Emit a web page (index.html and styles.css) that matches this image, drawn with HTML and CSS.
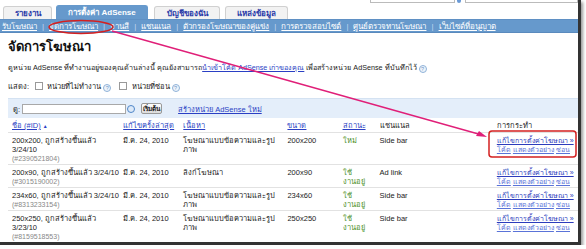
FILE: index.html
```html
<!DOCTYPE HTML>
<html>
    <head>
        <meta charset='utf-8'/>
        <link rel="stylesheet" href="styles.css">
    </head>
    <body>
        <div class="frame">
            <div class="chrome">
                <span class="cbox cbox1"></span>
                <span class="cdot"></span>
                <span class="cbox cbox2"></span>
            </div>
            <div class="tabs">
                <span class="tab t1">รายงาน</span>
                <span class="tab t2 on">การตั้งค่า AdSense</span>
                <span class="tab t3">บัญชีของฉัน</span>
                <span class="tab t4">แหล่งข้อมูล</span>
            </div>
            <div class="subnav">
                <a>รับโฆษณา</a><i>|</i>
                <a>จัดการโฆษณา</a><i>|</i>
                <a>จานสี</a><i>|</i>
                <a>แชนแนล</a><i>|</i>
                <a>ตัวกรองโฆษณาของคู่แข่ง</a><i>|</i>
                <a>การตรวจสอบไซต์</a><i>|</i>
                <a>ศูนย์ตรวจทานโฆษณา</a><i>|</i>
                <a>เว็บไซต์ที่อนุญาต</a>
            </div>
            <div class="main">
                <h1>จัดการโฆษณา</h1>
                <p class="desc">ดูหน่วย AdSense ที่ทำงานอยู่ของคุณด้านล่างนี้ คุณยังสามารถ<a>นำเข้าโค้ด AdSense เก่าของคุณ</a> เพื่อสร้างหน่วย AdSense ที่บันทึกไว้ <span class="help">?</span></p>
                <div class="show">
                    แสดง: <span class="cb"></span> หน่วยที่ไม่ทำงาน <span class="help">?</span>
                    <span class="cb cb2"></span> หน่วยที่ซ่อน <span class="help">?</span>
                </div>
                <div class="filter">
                    <span>ดู:</span>
                    <span class="field"></span>
                    <span class="go"></span>
                    <span class="btn">เริ่มต้น</span>
                    <a class="new">สร้างหน่วย AdSense ใหม่</a>
                </div>
                <table class="units">
                    <colgroup>
                        <col style="width:111px"><col style="width:60px"><col style="width:104px">
                        <col style="width:55px"><col style="width:37px"><col style="width:117px"><col style="width:85px">
                    </colgroup>
                    <tr class="head">
                        <th><a>ชื่อ (#ID)</a> <span class="sort">▲</span></th>
                        <th><a>แก้ไขครั้งล่าสุด</a></th>
                        <th><a>เนื้อหา</a></th>
                        <th><a>ขนาด</a></th>
                        <th><a>สถานะ</a></th>
                        <th>แชนแนล</th>
                        <th>การกระทำ</th>
                    </tr>
                    <tr class="r3">
                        <td>200x200, ถูกสร้างขึ้นแล้ว<br>3/24/10<span class="id">(#2390521804)</span></td>
                        <td>มี.ค. 24, 2010</td>
                        <td>โฆษณาแบบข้อความและรูป<br>ภาพ</td>
                        <td>200x200</td>
                        <td class="st">ใหม่</td>
                        <td>Side bar</td>
                        <td><a class="edit">แก้ไขการตั้งค่าโฆษณา »</a><br><a class="sm">โค้ด</a> <a class="sm">แสดงตัวอย่าง</a> <a class="sm">ซ่อน</a></td>
                    </tr>
                    <tr>
                        <td>200x90, ถูกสร้างขึ้นแล้ว 3/24/10<span class="id">(#3015190002)</span></td>
                        <td>มี.ค. 24, 2010</td>
                        <td>ลิงก์โฆษณา</td>
                        <td>200x90</td>
                        <td class="st">ใช้<br>งานอยู่</td>
                        <td>Ad link</td>
                        <td><a class="edit">แก้ไขการตั้งค่าโฆษณา »</a><br><a class="sm">โค้ด</a> <a class="sm">แสดงตัวอย่าง</a> <a class="sm">ซ่อน</a></td>
                    </tr>
                    <tr>
                        <td>234x60, ถูกสร้างขึ้นแล้ว 3/24/10<span class="id">(#8313233154)</span></td>
                        <td>มี.ค. 24, 2010</td>
                        <td>โฆษณาแบบข้อความและรูป<br>ภาพ</td>
                        <td>234x60</td>
                        <td class="st">ใช้<br>งานอยู่</td>
                        <td>Side bar</td>
                        <td><a class="edit">แก้ไขการตั้งค่าโฆษณา »</a><br><a class="sm">โค้ด</a> <a class="sm">แสดงตัวอย่าง</a> <a class="sm">ซ่อน</a></td>
                    </tr>
                    <tr class="r3">
                        <td>250x250, ถูกสร้างขึ้นแล้ว<br>3/23/10<span class="id">(#8159518553)</span></td>
                        <td>มี.ค. 24, 2010</td>
                        <td>โฆษณาแบบข้อความและรูป<br>ภาพ</td>
                        <td>250x250</td>
                        <td class="st">ใช้<br>งานอยู่</td>
                        <td>Side bar</td>
                        <td><a class="edit">แก้ไขการตั้งค่าโฆษณา »</a><br><a class="sm">โค้ด</a> <a class="sm">แสดงตัวอย่าง</a> <a class="sm">ซ่อน</a></td>
                    </tr>
                </table>
            </div>
            <!-- red marks drawn over the shot -->
            <svg class="marks" width="586" height="249" viewBox="0 0 586 249">
                <ellipse cx="81" cy="27" rx="32" ry="6.5" fill="none" stroke="#d42020" stroke-width="1.5"/>
                <line x1="112" y1="31" x2="482" y2="135" stroke="#e01f78" stroke-width="1.3"/>
                <polygon points="487,137 476,136 479,131" fill="#e01f78"/>
                <rect x="489" y="131" width="87" height="26" rx="3" fill="none" stroke="#d42020" stroke-width="1.5"/>
            </svg>
        </div>
    </body>
</html>
```

FILE: styles.css
```css
body{
    margin: 0;
    background: #fff;
    font-family: "Liberation Sans", "Noto Sans", sans-serif;
    font-size: 8px;
    color: #222;
}
a{
    color: #2a3fc4;
    text-decoration: underline;
}
.frame{
    position: relative;
    width: 578px;
    height: 242px;
    overflow: hidden;
    border-right: 3px solid #333;
    border-bottom: 3px solid #333;
    box-shadow: 2px 2px 3px #999;
}
.chrome{
    display: flex;
    height: 3px;
}
.cbox{
    display: block;
    height: 2px;
    border: 1px solid #bbb;
    border-top: none;
}
.cbox1{
    margin-left: 370px;
    width: 86px;
}
.cdot{
    width: 5px;
    height: 3px;
    margin: 0 4px 0 2px;
    background: #6a9ad6;
    border-radius: 0 0 3px 3px;
}
.cbox2{
    width: 115px;
}
.tabs{
    display: flex;
    align-items: flex-end;
    height: 13px;
    margin-top: 3px;
    padding-left: 3px;
}
.tab{
    display: block;
    height: 12px;
    line-height: 13px;
    text-align: center;
    font-weight: bold;
    font-size: 8px;
    color: #2a3aa8;
    background: #f2f2f2;
    border: 1px solid #d0d0d0;
    border-bottom: none;
    border-radius: 3px 3px 0 0;
}
.t1{ width: 47px; }
.t2{ width: 90px; margin-left: 4px; }
.t3{ width: 64px; margin-left: 6px; }
.t4{ width: 61px; margin-left: 5px; }
.tab.on{
    height: 13px;
    color: #fff;
    background: #6699cc;
    border-color: #6699cc;
}
.subnav{
    display: flex;
    align-items: center;
    height: 12px;
    padding-left: 2px;
    background: #6699cc;
    border-top: 1px solid #5f90c4;
    border-bottom: 1px solid #5a8abd;
    font-size: 8px;
}
.subnav a{
    color: #fff;
}
.subnav i{
    font-style: normal;
    color: #c5d8ee;
    margin: 0 5px;
}
.main{
    padding-left: 8px;
}
h1{
    margin: 6px 0 0 0;
    font-size: 13px;
    line-height: 16px;
    color: #111;
}
.desc{
    margin: 8px 0 0 0;
    line-height: 10px;
    font-size: 7.2px;
}
.desc a{
    color: #2a3fc4;
}
.help{
    display: inline-block;
    width: 6px;
    height: 6px;
    line-height: 6px;
    border: 1px solid #8fb2d8;
    border-radius: 50%;
    color: #6f98c8;
    font-size: 5.5px;
    text-align: center;
    vertical-align: -1px;
    background: #eef4fb;
}
.show{
    margin-top: 9px;
    line-height: 10px;
    font-size: 7.5px;
}
.cb{
    display: inline-block;
    width: 6px;
    height: 6px;
    border: 1px solid #999;
    background: #fff;
    vertical-align: -1px;
    margin: 0 2px 0 4px;
}
.cb2{
    margin-left: 6px;
}
.filter{
    display: flex;
    align-items: center;
    height: 19px;
    margin-top: 6px;
    padding-left: 5px;
    background: #e4eefa;
    border-top: 1px solid #d4e2f2;
    font-size: 7.5px;
}
.field{
    width: 102px;
    height: 8px;
    margin-left: 2px;
    border: 1px solid #a8a8a8;
    background: #fff;
}
.go{
    width: 6px;
    height: 6px;
    margin-left: 1px;
    border: 1px solid #4f86c8;
    border-radius: 50%;
    background: #dce9f8;
}
.btn{
    width: 19px;
    height: 9px;
    line-height: 9px;
    margin-left: 6px;
    text-align: center;
    font-size: 6.5px;
    font-weight: bold;
    border: 1px solid #999;
    border-radius: 2px;
    background: linear-gradient(#fff, #ddd);
}
.new{
    margin-left: 16px;
}
.units{
    width: 570px;
    table-layout: fixed;
    border-collapse: collapse;
}
.units th,.units td{
    height: 18px;
    padding: 3px 4px 1px 4px;
    vertical-align: top;
    text-align: left;
    white-space: nowrap;
    line-height: 9px;
    font-size: 7.5px;
    border-bottom: 1px solid #e2e2e2;
}
.units .r3 td{
    height: 27px;
}
.units th{
    height: 9px;
    font-weight: normal;
    padding-top: 3px;
    padding-bottom: 1px;
}
.sort{
    font-size: 5px;
    color: #2a3fc4;
}
.id{
    display: block;
    height: 9px;
    color: #888;
    font-size: 7px;
}
.st{
    color: #4d8f2a;
}
.edit{
    color: #2c3cbc;
    font-size: 7px;
}
.sm{
    color: #5a73d8;
    font-size: 7px;
}
.marks{
    position: absolute;
    top: 0;
    left: 0;
    pointer-events: none;
}
```
